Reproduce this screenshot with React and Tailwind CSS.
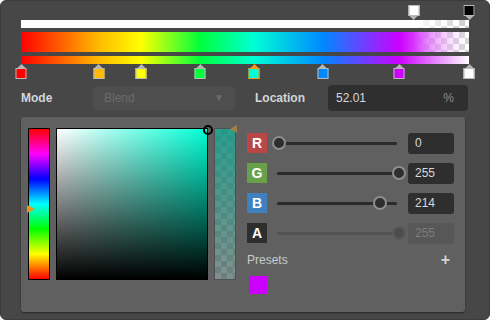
import React from "react";

const STOPS = [
  { pos: 0, color: "#ff0000" },
  { pos: 17.4, color: "#ffbb00" },
  { pos: 26.8, color: "#ffff00" },
  { pos: 40, color: "#00ff3c" },
  { pos: 52.01, color: "#00ffd6", active: true },
  { pos: 67.4, color: "#0088ff" },
  { pos: 84.4, color: "#cc00ff" },
  { pos: 100, color: "#ffffff" },
];

const ALPHA_STOPS = [
  { pos: 87.7, color: "#ffffff" },
  { pos: 100, color: "#000000" },
];

const CHANNELS = [
  { label: "R", value: 0, bg: "bg-[#bb4646]" },
  { label: "G", value: 255, bg: "bg-[#69a04a]" },
  { label: "B", value: 214, bg: "bg-[#3f80c0]" },
  { label: "A", value: 255, bg: "bg-[#2e2e2e]", disabled: true },
];

const checker =
  "bg-[image:conic-gradient(#cccccc_25%,#ffffff_0_50%,#cccccc_0_75%,#ffffff_0)] bg-[length:12px_12px]";

function Slider({ value, disabled }) {
  return (
    <div className="relative ml-[5px] w-[134px] h-[20px] flex items-center">
      <div
        className={`ml-[5px] h-[3px] w-[120px] rounded-full ${
          disabled ? "bg-[#535353]" : "bg-[#2b2b2b]"
        }`}
      />
      <div
        className={`absolute top-[3px] w-[14px] h-[14px] rounded-full border-2 ${
          disabled
            ? "bg-[#4c4c4c] border-[#5a5a5a]"
            : "bg-[#2e2e2e] border-[#8e8e8e]"
        }`}
        style={{ left: (value / 255) * 120 }}
      />
    </div>
  );
}

const App = () => {
  return (
    <div className="w-[490px] h-[320px] bg-[#474747] border border-[#3c3c3c] rounded-md px-[20px] pt-[4px] font-['Liberation_Sans',Arial,sans-serif] overflow-hidden">
      {/* alpha stops */}
      <div className="relative h-[15px] w-[448px]">
        {ALPHA_STOPS.map((s) => (
          <div
            key={s.pos}
            className="absolute top-0 flex flex-col items-center -translate-x-1/2"
            style={{ left: `${s.pos}%` }}
          >
            <div
              className="w-[11px] h-[11px] border border-[#b9b9b9]"
              style={{ background: s.color }}
            />
            <div className="w-0 h-0 border-x-[4px] border-x-transparent border-t-[4px] border-t-[#b4b4b4]" />
          </div>
        ))}
      </div>

      {/* bars */}
      <div className={`w-[448px] h-[8px] ${checker}`}>
        <div className="w-full h-full bg-[linear-gradient(to_right,#ffffff_87.7%,rgba(255,255,255,0))]" />
      </div>
      <div className={`mt-[4px] w-[448px] h-[20px] ${checker}`}>
        <div className="w-full h-full bg-[linear-gradient(to_right,#ff0000_0%,#ffbb00_17.4%,#ffff00_26.8%,#00ff3c_40%,#00ffd6_52.01%,#0088ff_67.4%,#cc00ff_84.4%,#ffffff_100%)] [mask-image:linear-gradient(to_right,#000_87.7%,rgba(0,0,0,0.2))]" />
      </div>
      <div className="mt-[4px] w-[448px] h-[8px] bg-[linear-gradient(to_right,#ff0000_0%,#ffbb00_17.4%,#ffff00_26.8%,#00ff3c_40%,#00ffd6_52.01%,#0088ff_67.4%,#cc00ff_84.4%,#ffffff_100%)]" />

      {/* color stops */}
      <div className="relative h-[16px] w-[448px]">
        {STOPS.map((s) => (
          <div
            key={s.pos}
            className="absolute top-0 flex flex-col items-center -translate-x-1/2"
            style={{ left: `${s.pos}%` }}
          >
            <div
              className={`w-0 h-0 border-x-[4px] border-x-transparent border-b-[4px] ${
                s.active ? "border-b-[#f39a12]" : "border-b-[#b4b4b4]"
              }`}
            />
            <div
              className={`w-[11px] h-[11px] border ${
                s.active ? "border-[#f39a12]" : "border-[#b9b9b9]"
              }`}
              style={{ background: s.color }}
            />
          </div>
        ))}
      </div>

      {/* mode / location */}
      <div className="mt-[5px] flex items-center h-[25px] text-[12px]">
        <span className="w-[72px] font-bold text-[#d2d5da]">Mode</span>
        <div className="w-[142px] h-[24px] rounded-[4px] bg-[#4e4e4e] flex items-center justify-between pl-[11px] pr-[11px] text-[#6b6b6b]">
          <span>Blend</span>
          <span className="text-[10px]">▼</span>
        </div>
        <span className="ml-[20px] w-[73px] font-bold text-[#d2d5da]">Location</span>
        <div className="w-[140px] h-[26px] rounded-[4px] bg-[#2f2f2f] flex items-center justify-between pl-[8px] pr-[14px]">
          <span className="text-[#d6d8dc]">52.01</span>
          <span className="text-[#8c8c8c]">%</span>
        </div>
      </div>

      {/* picker panel */}
      <div className="mt-[7px] w-[444px] h-[195px] rounded-[3px] bg-[#606060] shadow-[0_1px_2px_rgba(0,0,0,0.45)] pl-[7px] pt-[11px] flex">
        <div className="relative w-[22px] h-[152px] border border-black bg-[linear-gradient(to_bottom,#ff0000,#ff00ff,#0000ff,#00ffff,#00ff00,#ffff00,#ff0000)]">
          <div className="absolute left-[-2px] top-[76px] w-0 h-0 border-y-[4px] border-y-transparent border-l-[8px] border-l-[#ee9416]" />
        </div>
        <div className="relative ml-[6px] w-[152px] h-[152px] border border-black bg-[#00ffd6] bg-[image:linear-gradient(to_top,#000,rgba(0,0,0,0)),linear-gradient(to_right,#fff,rgba(255,255,255,0))]">
          <div className="absolute right-[-6px] top-[-4px] w-[10px] h-[10px] rounded-full border-2 border-black" />
        </div>
        <div className="relative ml-[6px] w-[22px] h-[152px] border border-[#505050] bg-[image:conic-gradient(#7c7c7c_25%,#8e8e8e_0_50%,#7c7c7c_0_75%,#8e8e8e_0)] bg-[length:12px_12px]">
          <div className="w-full h-full bg-[linear-gradient(to_bottom,rgba(0,165,140,0.7),rgba(0,165,140,0.1))]" />
          <div className="absolute right-[-2px] top-[-4px] w-0 h-0 border-y-[4px] border-y-transparent border-r-[7px] border-r-[#a27e46]" />
        </div>

        <div className="ml-[11px] mt-[5px] w-[207px] flex flex-col">
          <div className="flex flex-col gap-[10px]">
            {CHANNELS.map((c) => (
              <div key={c.label} className="flex items-center h-[20px]">
                <div
                  className={`w-[20px] h-[20px] ${c.bg} flex items-center justify-center text-white font-bold text-[14px]`}
                >
                  {c.label}
                </div>
                <Slider value={c.value} disabled={c.disabled} />
                <div
                  className={`ml-[2px] w-[46px] h-[21px] rounded-[3px] flex items-center pl-[7px] text-[12px] ${
                    c.disabled
                      ? "bg-[#575757] text-[#7d7d7d]"
                      : "bg-[#2e2e2e] text-[#d6d8dc]"
                  }`}
                >
                  {c.value}
                </div>
              </div>
            ))}
          </div>
          <div className="mt-[9px] flex items-center justify-between pr-[4px] h-[16px]">
            <span className="text-[12px] text-[#c8cacd]">Presets</span>
            <span className="text-[16px] font-bold text-[#d4d4d4] leading-none">+</span>
          </div>
          <div className="mt-[8px] ml-[2px] w-[18px] h-[18px] bg-[#cc00ff]" />
        </div>
      </div>
    </div>
  );
};

export default App;
